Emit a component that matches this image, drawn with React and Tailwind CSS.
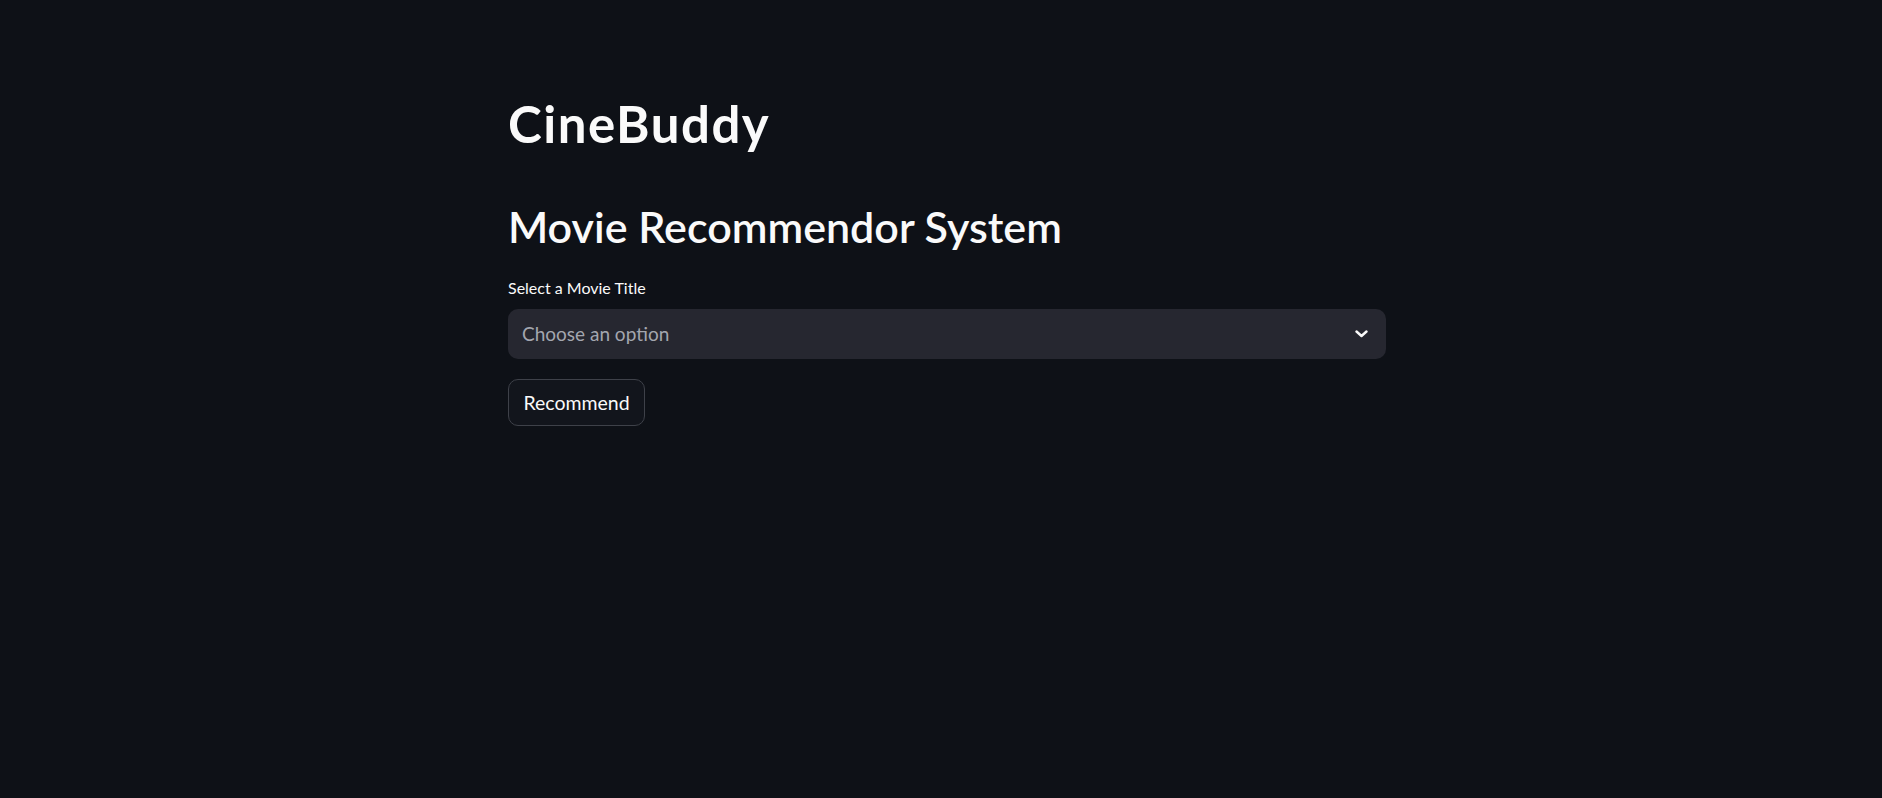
import React from "react";

const App = () => {
  return (
    <div className="w-full min-h-screen bg-[#0e1117] text-[#fafafa] font-['Lato','Noto_Sans',sans-serif]">
      <div className="mx-auto w-[890px] pl-[12px] pt-[94px]">
        {/* Titles */}
        <h1 className="text-[51px] leading-[60px] font-bold tracking-[1.5px]">CineBuddy</h1>
        <h2 className="mt-[47px] text-[43px] leading-[52px] font-semibold">
          Movie Recommendor System
        </h2>

        {/* Select */}
        <label className="mt-[24px] block text-[16px] leading-[22px]">
          Select a Movie Title
        </label>
        <div className="mt-[10px] flex h-[50px] items-center justify-between rounded-[10px] bg-[#262730] pl-[14px] pr-[18px]">
          <span className="text-[19px] leading-[24px] text-[#a3a6af]">
            Choose an option
          </span>
          <svg width="13" height="8" viewBox="0 0 13 8" fill="none">
            <path
              d="M1.5 1.5 L6.5 6 L11.5 1.5"
              stroke="#fafafa"
              strokeWidth="2.4"
              strokeLinecap="round"
              strokeLinejoin="round"
            />
          </svg>
        </div>

        {/* Button */}
        <button className="mt-[20px] flex h-[47px] w-[137px] items-center justify-center rounded-[10px] border border-[#3e4149] bg-[#12151c] text-[19.5px] leading-[24px]">
          Recommend
        </button>
      </div>
    </div>
  );
};

export default App;
